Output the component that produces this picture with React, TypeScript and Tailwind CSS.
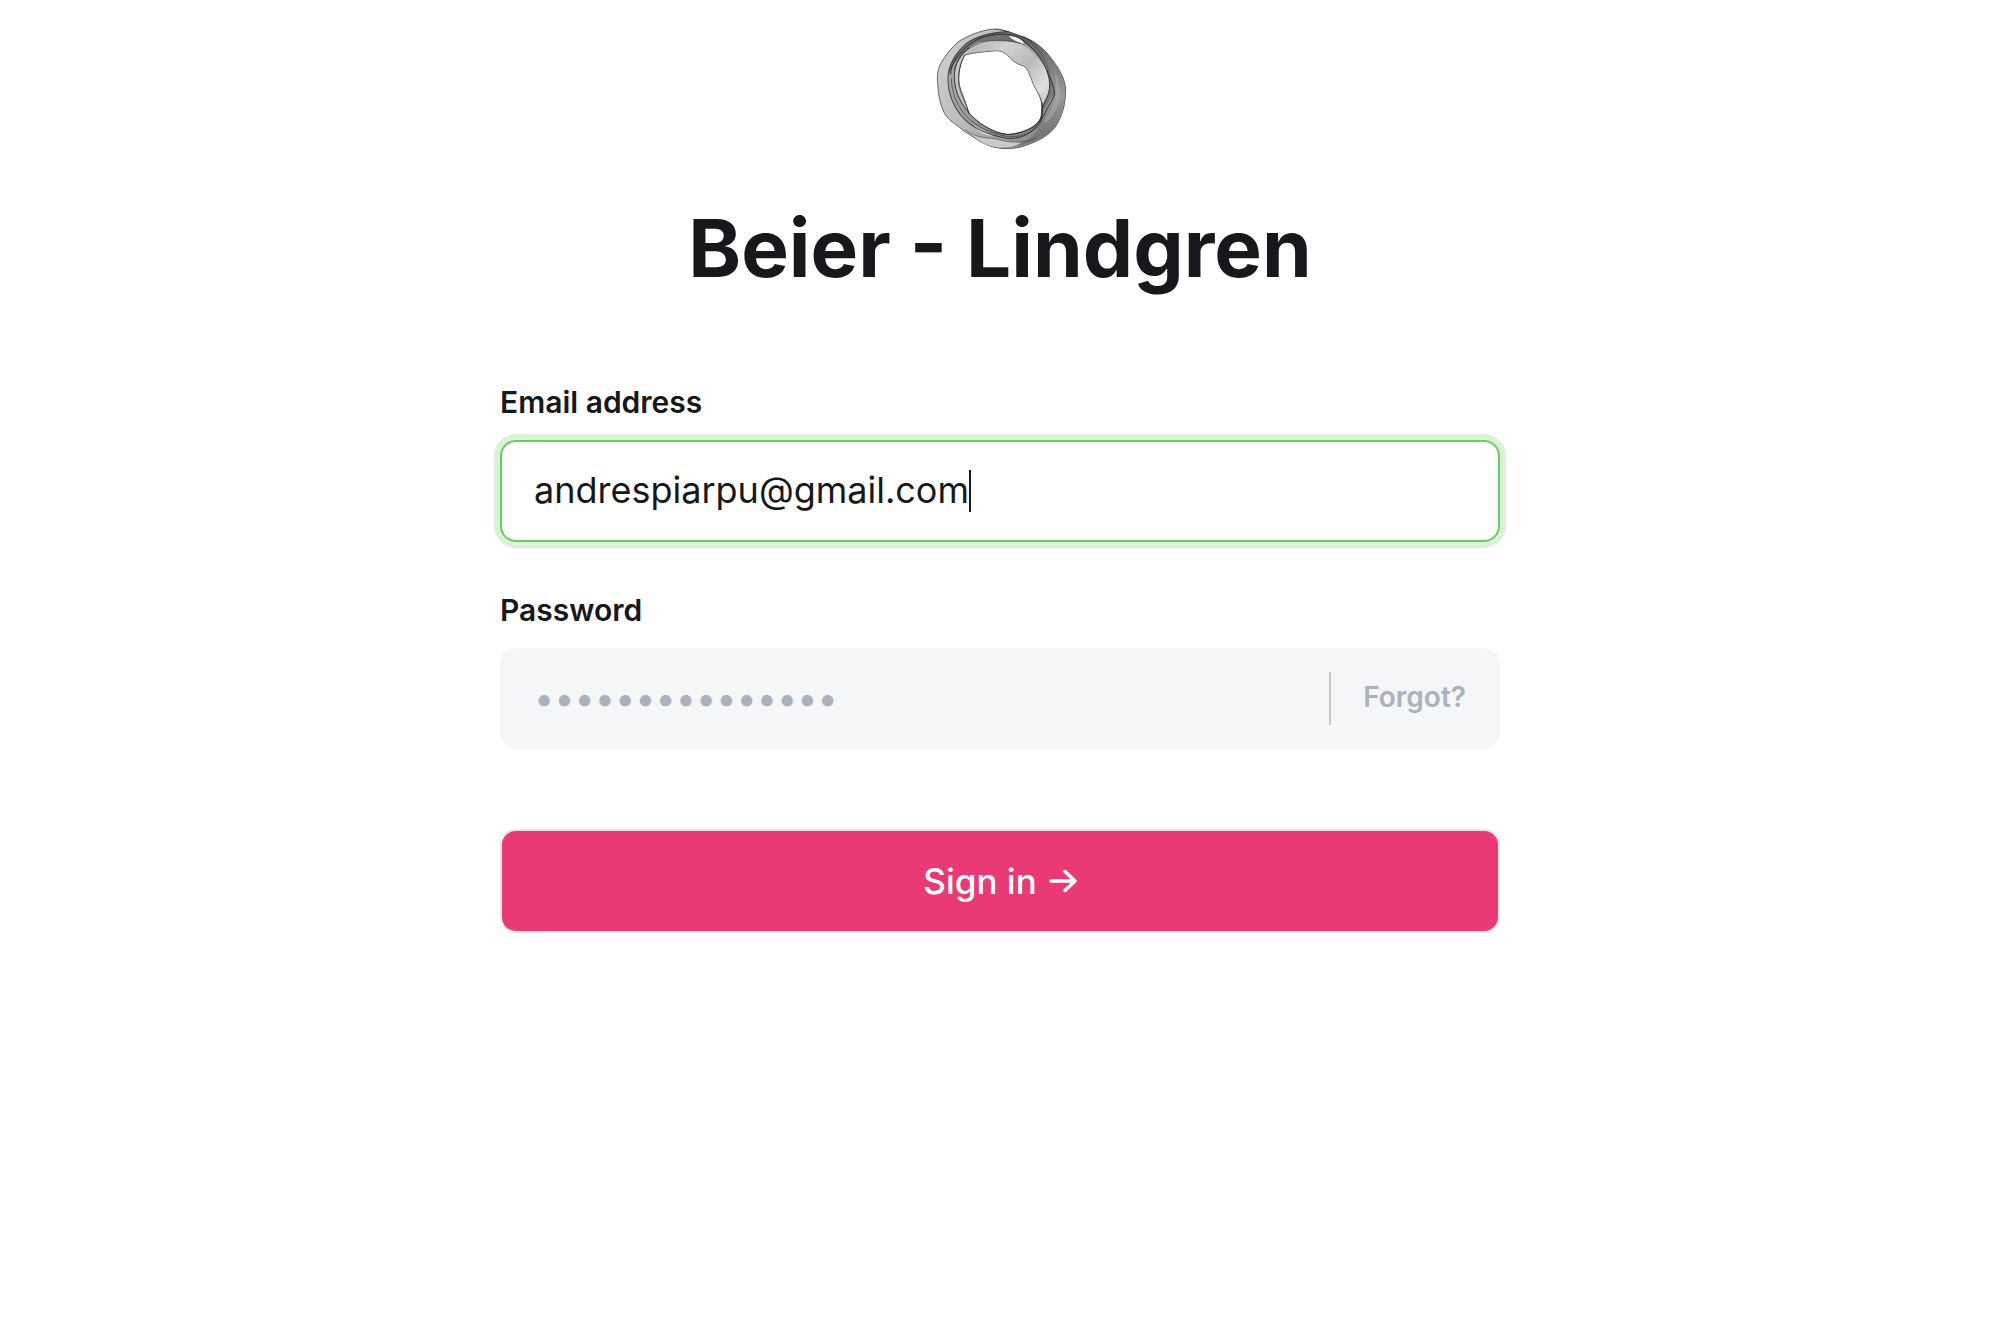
function RingLogo() {
  return (
    <svg viewBox="0 0 480 435" className="h-[145px] w-[160px]" role="img" aria-label="Beier - Lindgren logo">
      <defs>
        <linearGradient id="band" gradientUnits="userSpaceOnUse" x1="60" y1="120" x2="430" y2="300">
          <stop offset="0" stopColor="#cccccc" />
          <stop offset="0.35" stopColor="#bdbdbd" />
          <stop offset="0.75" stopColor="#959595" />
          <stop offset="1" stopColor="#858585" />
        </linearGradient>
        <linearGradient id="veil" gradientUnits="userSpaceOnUse" x1="150" y1="80" x2="380" y2="270">
          <stop offset="0" stopColor="#b0b0b0" />
          <stop offset="0.3" stopColor="#d2d2d2" />
          <stop offset="0.6" stopColor="#bababa" />
          <stop offset="0.85" stopColor="#dfdfdf" />
          <stop offset="1" stopColor="#c4c4c4" />
        </linearGradient>
        <linearGradient id="shade" gradientUnits="userSpaceOnUse" x1="320" y1="70" x2="390" y2="360">
          <stop offset="0" stopColor="#606060" />
          <stop offset="0.35" stopColor="#808080" />
          <stop offset="0.65" stopColor="#999999" />
          <stop offset="1" stopColor="#747474" />
        </linearGradient>
      </defs>
      <path
        fill="url(#band)"
        fillRule="evenodd"
        stroke="#4c4c4c"
        strokeWidth="2.5"
        d="M228 42C255 44 285 58 312 66C340 76 368 98 386 120C406 145 432 180 436 215C440 255 428 305 405 337C380 368 345 382 305 395C275 403 240 403 210 393C180 382 158 364 128 345C105 325 84 316 72 292C60 268 54 235 53 205C51 185 52 165 62 146C76 122 95 96 118 78C145 62 190 42 228 42ZM135 120C122 140 113 175 118 210C126 236 138 262 147 296C170 322 215 355 262 358C305 357 355 335 363 305C368 270 366 255 350 226C335 206 330 165 312 153C296 148 288 146 272 130C258 116 250 106 225 107C195 110 160 112 135 120Z"
      />
      <path
        fill="url(#veil)"
        d="M135 120C150 98 200 80 270 80C320 84 360 130 380 165C398 190 392 240 367 268C366 255 360 243 350 226C335 206 330 165 312 153C296 148 288 146 272 130C258 116 250 106 225 107C195 110 160 112 135 120Z"
      />
      <path
        fill="#565656"
        fillOpacity="0.75"
        d="M265 50C215 50 170 62 140 84C112 108 86 145 85 182C100 142 130 105 172 84C215 72 270 72 318 92C300 76 285 60 265 50Z"
      />
      <path
        fill="url(#shade)"
        d="M265 50C290 58 312 66 330 74C365 92 385 116 400 140C425 175 436 205 436 235C432 280 425 315 400 342C370 372 330 386 285 394C330 378 355 350 363 320C368 300 366 285 372 268C392 240 392 210 386 180C375 145 350 112 318 88C300 76 280 60 265 50Z"
      />
      <path fill="#aaa" fillOpacity="0.6" d="M405 170C420 200 428 245 410 280C395 310 378 325 372 322C385 300 402 280 406 240C408 215 408 190 405 170Z" />
      <path fill="#5c5c5c" fillOpacity="0.5" d="M386 180C396 195 405 218 404 238C390 256 378 270 368 292C366 280 368 270 374 258C390 235 392 205 386 180Z" />
      <path fill="#f1f1f1" d="M266 63C290 64 304 70 313 86C296 84 280 76 266 63Z" />
      <path
        fill="#6b6b6b"
        fillOpacity="0.35"
        d="M85 182C84 240 102 285 135 318C165 345 210 368 262 366C300 366 345 352 364 308C345 345 300 358 262 358C215 355 170 322 147 296C125 268 105 232 102 185C102 150 118 122 135 104C108 128 92 152 85 182Z"
      />
      <path
        fill="#c9c9c9"
        d="M136 344C160 364 188 370 226 371C255 378 278 382 304 382C282 398 246 402 212 393C184 384 160 364 136 344Z"
      />
      <path fill="#e0e0e0" d="M158 328C180 344 206 352 220 362C195 364 172 350 158 328Z" fillOpacity="0.8" />
      <g fill="none" stroke="#1c1c1c" strokeWidth="3" strokeLinecap="round" strokeOpacity="0.8">
        <path d="M265 50C215 50 165 66 138 86C108 112 84 150 84 190C84 235 98 268 122 300C155 340 205 360 260 370C310 374 345 350 372 300C385 270 398 258 404 238C402 215 392 190 380 165" />
        <path d="M92 178C92 135 135 92 175 72C205 60 240 54 275 60C300 68 318 80 340 104C365 130 385 165 389 205C390 245 370 262 366 285C370 325 330 352 265 359C215 354 165 318 140 285C118 258 102 222 103 180C104 150 118 118 148 98" />
        <path d="M94 190C94 230 112 280 148 312C180 340 220 358 270 366C320 364 350 345 362 322C368 300 368 285 366 262" strokeWidth="2" />
        <path d="M147 296C142 270 120 240 116 205C114 170 122 140 135 120" strokeWidth="2" />
        <path d="M102 165C115 120 145 98 185 82C220 72 265 76 300 84" strokeWidth="2" />
        <path d="M312 66C345 84 375 125 388 172" strokeWidth="2" strokeOpacity="0.6" />
        <path d="M136 344C165 368 195 368 226 371C270 386 315 384 345 370" strokeWidth="2" strokeOpacity="0.6" />
        <path d="M135 120C160 112 195 110 225 107C250 106 258 116 272 130C288 146 296 148 312 153C330 165 335 206 350 226C360 243 366 255 366 275" strokeWidth="2" strokeOpacity="0.45" />
        <path d="M228 42C262 46 305 64 335 78" strokeWidth="2" strokeOpacity="0.6" />
      </g>
    </svg>
  );
}

export default function App() {
  return (
    <main className="min-h-screen bg-white pt-[15px] font-['Inter',sans-serif] text-[#17181c]">
      <form className="mx-auto flex w-1/2 flex-col" onSubmit={(e) => e.preventDefault()}>
        <header className="flex flex-col items-center">
          <RingLogo />
          <h1 className="mt-[38px] text-[80px] leading-[100px] font-bold whitespace-nowrap">Beier - Lindgren</h1>
        </header>

        <label htmlFor="email" className="mt-[86px] text-[30px] leading-[36px] font-semibold">
          Email address
        </label>
        <div className="mt-5 flex h-[102px] items-center rounded-2xl border-2 border-[#69ce5c] bg-white px-8 ring-6 ring-[#daf2d6]">
          <input
            id="email"
            type="email"
            defaultValue="andrespiarpu@gmail.com"
            className="min-w-0 pb-0.5 [field-sizing:content] text-[36px] leading-[44px] caret-transparent outline-none"
          />
          <span aria-hidden="true" className="h-[42px] w-0.5 bg-[#17181c]" />
        </div>

        <label htmlFor="password" className="mt-[50px] text-[30px] leading-[36px] font-semibold">
          Password
        </label>
        <div className="mt-5 flex h-[101px] items-center rounded-2xl bg-[#f4f6f8] px-[34px]">
          <input
            id="password"
            type="password"
            placeholder="•••••••••••••••"
            className="min-w-0 flex-1 pb-0.5 text-[36px] leading-[44px] outline-none placeholder:text-[#abb2be]"
          />
          <div className="flex h-[53px] items-center border-l-2 border-[#c5c7ca] pl-8">
            <a href="#forgot" className="pb-1 text-[28px] leading-[36px] font-semibold text-[#abb2be]">
              Forgot?
            </a>
          </div>
        </div>

        <button
          type="submit"
          className="mt-20 flex h-[104px] items-center justify-center gap-3 rounded-2xl border-2 border-[#e7e7e7] bg-[#ea3a76] text-[35px] leading-[44px] font-medium text-white"
        >
          Sign in
          <svg
            viewBox="0 0 28 24"
            className="h-6 w-7"
            fill="none"
            stroke="currentColor"
            strokeWidth="3.5"
            strokeLinecap="round"
            strokeLinejoin="round"
            aria-hidden="true"
          >
            <path d="M2 12H26M16 2.5L26 12L16 21.5" />
          </svg>
        </button>
      </form>
    </main>
  );
}
